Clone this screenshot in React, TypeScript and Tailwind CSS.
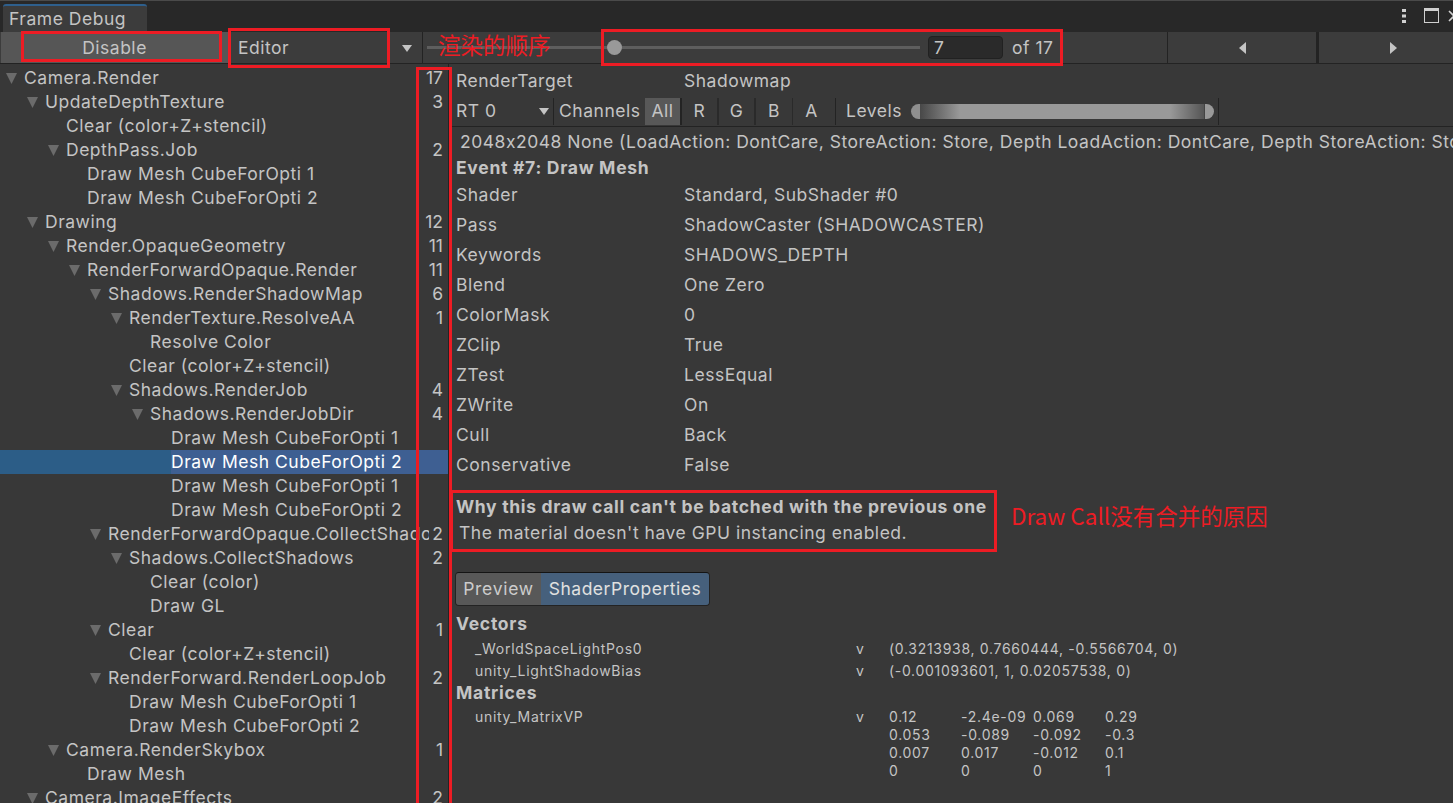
const INDENT = [
	"pl-[24px]",
	"pl-[45px]",
	"pl-[66px]",
	"pl-[87px]",
	"pl-[108px]",
	"pl-[129px]",
	"pl-[150px]",
	"pl-[171px]",
];

type Row = { name: string; depth: number; count?: number; open?: boolean; selected?: boolean };

const ROWS: Row[] = [
	{ name: "Camera.Render", depth: 0, count: 17, open: true },
	{ name: "UpdateDepthTexture", depth: 1, count: 3, open: true },
	{ name: "Clear (color+Z+stencil)", depth: 2 },
	{ name: "DepthPass.Job", depth: 2, count: 2, open: true },
	{ name: "Draw Mesh CubeForOpti 1", depth: 3 },
	{ name: "Draw Mesh CubeForOpti 2", depth: 3 },
	{ name: "Drawing", depth: 1, count: 12, open: true },
	{ name: "Render.OpaqueGeometry", depth: 2, count: 11, open: true },
	{ name: "RenderForwardOpaque.Render", depth: 3, count: 11, open: true },
	{ name: "Shadows.RenderShadowMap", depth: 4, count: 6, open: true },
	{ name: "RenderTexture.ResolveAA", depth: 5, count: 1, open: true },
	{ name: "Resolve Color", depth: 6 },
	{ name: "Clear (color+Z+stencil)", depth: 5 },
	{ name: "Shadows.RenderJob", depth: 5, count: 4, open: true },
	{ name: "Shadows.RenderJobDir", depth: 6, count: 4, open: true },
	{ name: "Draw Mesh CubeForOpti 1", depth: 7 },
	{ name: "Draw Mesh CubeForOpti 2", depth: 7, selected: true },
	{ name: "Draw Mesh CubeForOpti 1", depth: 7 },
	{ name: "Draw Mesh CubeForOpti 2", depth: 7 },
	{ name: "RenderForwardOpaque.CollectShadows", depth: 4, count: 2, open: true },
	{ name: "Shadows.CollectShadows", depth: 5, count: 2, open: true },
	{ name: "Clear (color)", depth: 6 },
	{ name: "Draw GL", depth: 6 },
	{ name: "Clear", depth: 4, count: 1, open: true },
	{ name: "Clear (color+Z+stencil)", depth: 5 },
	{ name: "RenderForward.RenderLoopJob", depth: 4, count: 2, open: true },
	{ name: "Draw Mesh CubeForOpti 1", depth: 5 },
	{ name: "Draw Mesh CubeForOpti 2", depth: 5 },
	{ name: "Camera.RenderSkybox", depth: 2, count: 1, open: true },
	{ name: "Draw Mesh", depth: 3 },
	{ name: "Camera.ImageEffects", depth: 1, count: 2, open: true },
];

const DETAILS = [
	["Shader", "Standard, SubShader #0"],
	["Pass", "ShadowCaster (SHADOWCASTER)"],
	["Keywords", "SHADOWS_DEPTH"],
	["Blend", "One Zero"],
	["ColorMask", "0"],
	["ZClip", "True"],
	["ZTest", "LessEqual"],
	["ZWrite", "On"],
	["Cull", "Back"],
	["Conservative", "False"],
];

const MATRIX = [
	["0.12", "-2.4e-09", "0.069", "0.29"],
	["0.053", "-0.089", "-0.092", "-0.3"],
	["0.007", "0.017", "-0.012", "0.1"],
	["0", "0", "0", "1"],
];

function TreeRow({ row }: { row: Row }) {
	return (
		<div
			className={`relative flex h-6 shrink-0 items-center pr-[5px] ${INDENT[row.depth]} ${
				row.selected ? "bg-[#3e5f92] text-white" : ""
			}`}
		>
			{row.selected && <div className="absolute inset-y-0 left-0 w-[171px] bg-[#2c5d87]" />}
			{row.open && (
				<svg className="-ml-[18px] mr-[7px] h-[11px] w-[11px] shrink-0" viewBox="0 0 11 11">
					<polygon points="0,0 11,0 5.5,11" fill="#6b6b6b" />
				</svg>
			)}
			<span className="relative -mr-[5px] min-w-0 flex-1 overflow-hidden whitespace-nowrap">{row.name}</span>
			<span className="relative w-[19px] shrink-0 whitespace-nowrap text-right tracking-normal">{row.count}</span>
		</div>
	);
}

function ShaderProp({ name, value }: { name: string; value: string }) {
	return (
		<div className="flex h-[22px] shrink-0 items-center whitespace-nowrap text-[14px] tracking-[0.7px]">
			<span className="w-[407px] pl-[26px]">{name}</span>
			<span className="w-[33px]">v</span>
			<span>{value}</span>
		</div>
	);
}

export default function App() {
	return (
		<div className="relative h-[803px] w-[1453px] overflow-hidden bg-[#383838] font-['Inter',sans-serif] text-[17.5px] tracking-[0.52px] text-[#c4c4c4] [font-feature-settings:'calt'_0]">
			{/* tab strip */}
			<div className="flex h-8 items-end justify-between border-t border-[#4a4a4a] bg-[#282828] pl-[3px]">
				<div className="flex h-[28px] w-[144px] items-center rounded-t-[3px] border-t-[2px] border-[#2e5f8c] bg-[#3c3c3c] pl-[6px] text-[#c4c4c4]">
					Frame Debug
				</div>
				<div className="flex h-[28px] items-start self-start pt-[7px]">
					<svg className="mr-[18px] mt-[1px] h-[14px] w-[4px] shrink-0" viewBox="0 0 4 14">
						<rect x="0" y="0" width="4" height="3" fill="#d0d0d0" />
						<rect x="0" y="5.5" width="4" height="3" fill="#d0d0d0" />
						<rect x="0" y="11" width="4" height="3" fill="#d0d0d0" />
					</svg>
					<svg className="mr-[9px] h-[15px] w-[15px] shrink-0" viewBox="0 0 15 15">
						<rect x="0.5" y="0.5" width="14" height="14" fill="none" stroke="#d0d0d0" />
						<rect x="0" y="0" width="15" height="3" fill="#d0d0d0" />
					</svg>
					<svg className="-mr-[7px] mt-[2px] h-[12px] w-[12px] shrink-0" viewBox="0 0 12 12">
						<path d="M1 1 L11 11 M11 1 L1 11" stroke="#d0d0d0" strokeWidth="1.6" />
					</svg>
				</div>
			</div>

			{/* toolbar */}
			<div className="flex h-[32px] items-stretch border-b border-[#232323] bg-[#3c3c3c]">
				<div className="ml-[1px] flex w-[227px] shrink-0 items-center justify-center bg-[#565656] pt-[1px]">Disable</div>
				<div className="ml-[4px] flex w-[191px] shrink-0 items-center justify-between border-r border-[#232323] pl-[6px] pr-[10px] pt-[1px]">
					<span>Editor</span>
					<svg className="h-[7px] w-[10px]" viewBox="0 0 10 7">
						<polygon points="0,0 10,0 5,7" fill="#c4c4c4" />
					</svg>
				</div>
				<div className="ml-[4px] flex w-[493px] shrink-0 items-center">
					<div className="relative h-[3px] w-full bg-[#5e5e5e]">
						<div className="absolute left-[180px] top-[-6px] h-[15px] w-[15px] rounded-full bg-[#999999]" />
					</div>
				</div>
				<div className="ml-[8px] flex w-[75px] shrink-0 items-center self-center">
					<div className="flex h-[23px] w-full items-center rounded-[4px] border border-[#212121] bg-[#2a2a2a] pl-[5px] pt-[1px]">7</div>
				</div>
				<div className="ml-[9px] flex w-[156px] shrink-0 items-center border-r border-[#232323] pt-[1px]">of 17</div>
				<div className="flex w-[151px] shrink-0 items-center justify-center border-r-[3px] border-[#232323]">
					<svg className="h-[12px] w-[7px]" viewBox="0 0 7 12">
						<polygon points="7,0 7,12 0,6" fill="#c4c4c4" />
					</svg>
				</div>
				<div className="flex flex-1 items-center justify-center pl-[14px]">
					<svg className="h-[12px] w-[7px]" viewBox="0 0 7 12">
						<polygon points="0,0 0,12 7,6" fill="#c4c4c4" />
					</svg>
				</div>
			</div>

			<div className="flex h-[739px]">
				{/* event tree */}
				<div className="flex w-[448px] shrink-0 flex-col overflow-hidden pt-[2px]">
					{ROWS.map((row, i) => (
						<TreeRow key={i} row={row} />
					))}
				</div>

				{/* details */}
				<div className="flex min-w-0 flex-1 flex-col overflow-hidden border-l border-[#232323]">
					<div className="flex h-[34px] shrink-0 items-center pl-[7px]">
						<span className="w-[228px]">RenderTarget</span>
						<span>Shadowmap</span>
					</div>
					<div className="flex h-[29px] shrink-0 items-stretch border-b border-[#232323] pb-[1px]">
						<div className="flex w-[105px] items-center justify-between border-r border-[#232323] pl-[7px] pr-[4px]">
							<span>RT 0</span>
							<svg className="h-[7px] w-[10px]" viewBox="0 0 10 7">
								<polygon points="0,0 10,0 5,7" fill="#c4c4c4" />
							</svg>
						</div>
						<div className="flex w-[91px] items-center overflow-hidden whitespace-nowrap pl-[5px]">Channels</div>
						<div className="flex w-[37px] items-center justify-center border-r-[2px] border-[#232323] bg-[#585858]">All</div>
						<div className="flex w-[37px] items-center justify-center border-r-[2px] border-[#2a2a2a]">R</div>
						<div className="flex w-[37px] items-center justify-center border-r-[2px] border-[#2a2a2a]">G</div>
						<div className="flex w-[37px] items-center justify-center border-r border-[#2a2a2a]">B</div>
						<div className="flex w-[43px] items-center justify-center border-r border-[#232323] pr-[5px]">A</div>
						<div className="flex w-[383px] items-center border-r border-[#232323] pl-[10px] pr-[4px]">
							<span className="w-[65px] shrink-0">Levels</span>
							<div className="h-[15px] w-[9px] rounded-l-full bg-[#8f8f8f]" />
							<div className="h-[15px] flex-1 bg-gradient-to-r from-[#484848] via-[#999999] via-[14%] to-[#999999]">
								<div className="h-full w-full bg-gradient-to-r from-transparent from-[88%] to-[#555555]" />
							</div>
							<div className="h-[15px] w-[10px] rounded-r-full border-l border-[#444444] bg-[#999999]" />
						</div>
					</div>
					<div className="flex h-[29px] shrink-0 items-center whitespace-nowrap pl-[11px] pt-[2px]">
						2048x2048 None (LoadAction: DontCare, StoreAction: Store, Depth LoadAction: DontCare, Depth StoreAction: Store)
					</div>
					<div className="flex h-6 shrink-0 items-center pl-[7px] font-bold tracking-[0.72px]">Event #7: Draw Mesh</div>
					{DETAILS.map(([label, value]) => (
						<div key={label} className="flex h-[30px] shrink-0 items-center pl-[7px]">
							<span className="w-[228px]">{label}</span>
							<span>{value}</span>
						</div>
					))}
					<div className="mt-[15px] flex h-6 shrink-0 items-center whitespace-nowrap pl-[7px] font-bold tracking-[0.68px]">
						Why this draw call can't be batched with the previous one
					</div>
					<div className="mt-[2px] flex h-6 shrink-0 items-center whitespace-nowrap pl-[10px]">
						The material doesn't have GPU instancing enabled.
					</div>
					<div className="ml-[6px] mt-[27px] flex h-[34px] w-[255px] shrink-0 overflow-hidden rounded-[4px] border border-[#232323] border-t-[#141414]">
						<div className="flex w-[85px] items-center justify-center bg-[#585858] text-[#cccccc] tracking-[0.7px]">Preview</div>
						<div className="flex flex-1 items-center justify-center bg-[#46607c] text-[#e0e0e0]">ShaderProperties</div>
					</div>
					<div className="mt-[6px] flex h-6 shrink-0 items-center pl-[7px] font-bold tracking-[0.72px]">Vectors</div>
					<div className="flex shrink-0 flex-col pt-[1px]">
						<ShaderProp name="_WorldSpaceLightPos0" value="(0.3213938, 0.7660444, -0.5566704, 0)" />
						<ShaderProp name="unity_LightShadowBias" value="(-0.001093601, 1, 0.02057538, 0)" />
					</div>
					<div className="flex h-6 shrink-0 items-center pl-[7px] font-bold tracking-[0.72px]">Matrices</div>
					<div className="mt-[2px] flex shrink-0 items-start text-[14px] tracking-[0.7px]">
						<span className="flex h-[18px] w-[407px] items-center pl-[26px]">unity_MatrixVP</span>
						<span className="flex h-[18px] w-[33px] items-center">v</span>
						<div className="grid grid-cols-[72px_72px_72px_72px]">
							{MATRIX.flat().map((cell, i) => (
								<span key={i} className="flex h-[18px] items-center whitespace-nowrap">
									{cell}
								</span>
							))}
						</div>
					</div>
				</div>
			</div>

			{/* red annotations drawn over the screenshot */}
			<div className="absolute left-[21px] top-[31px] h-[31px] w-[201px] border-[3px] border-[#ed1c24]" />
			<div className="absolute left-[228px] top-[28px] h-[40px] w-[162px] border-[3px] border-[#ed1c24]" />
			<div className="absolute left-[601px] top-[29px] h-[37px] w-[462px] border-[3px] border-[#ed1c24]" />
			<div className="absolute left-[416px] top-[67px] h-[740px] w-[36px] border-[3px] border-[#ed1c24]" />
			<div className="absolute left-[450px] top-[490px] h-[62px] w-[547px] border-[3px] border-[#ed1c24]" />
			<div className="absolute left-[438px] top-[28px] font-['Noto_Sans_CJK_SC',sans-serif] text-[22.5px] font-normal tracking-normal text-[#ed1c24]">
				渲染的顺序
			</div>
			<div className="absolute left-[1011px] top-[499px] font-['Noto_Sans_CJK_SC',sans-serif] text-[22.5px] font-normal tracking-normal text-[#ed1c24]">
				Draw Call没有合并的原因
			</div>
		</div>
	);
}
